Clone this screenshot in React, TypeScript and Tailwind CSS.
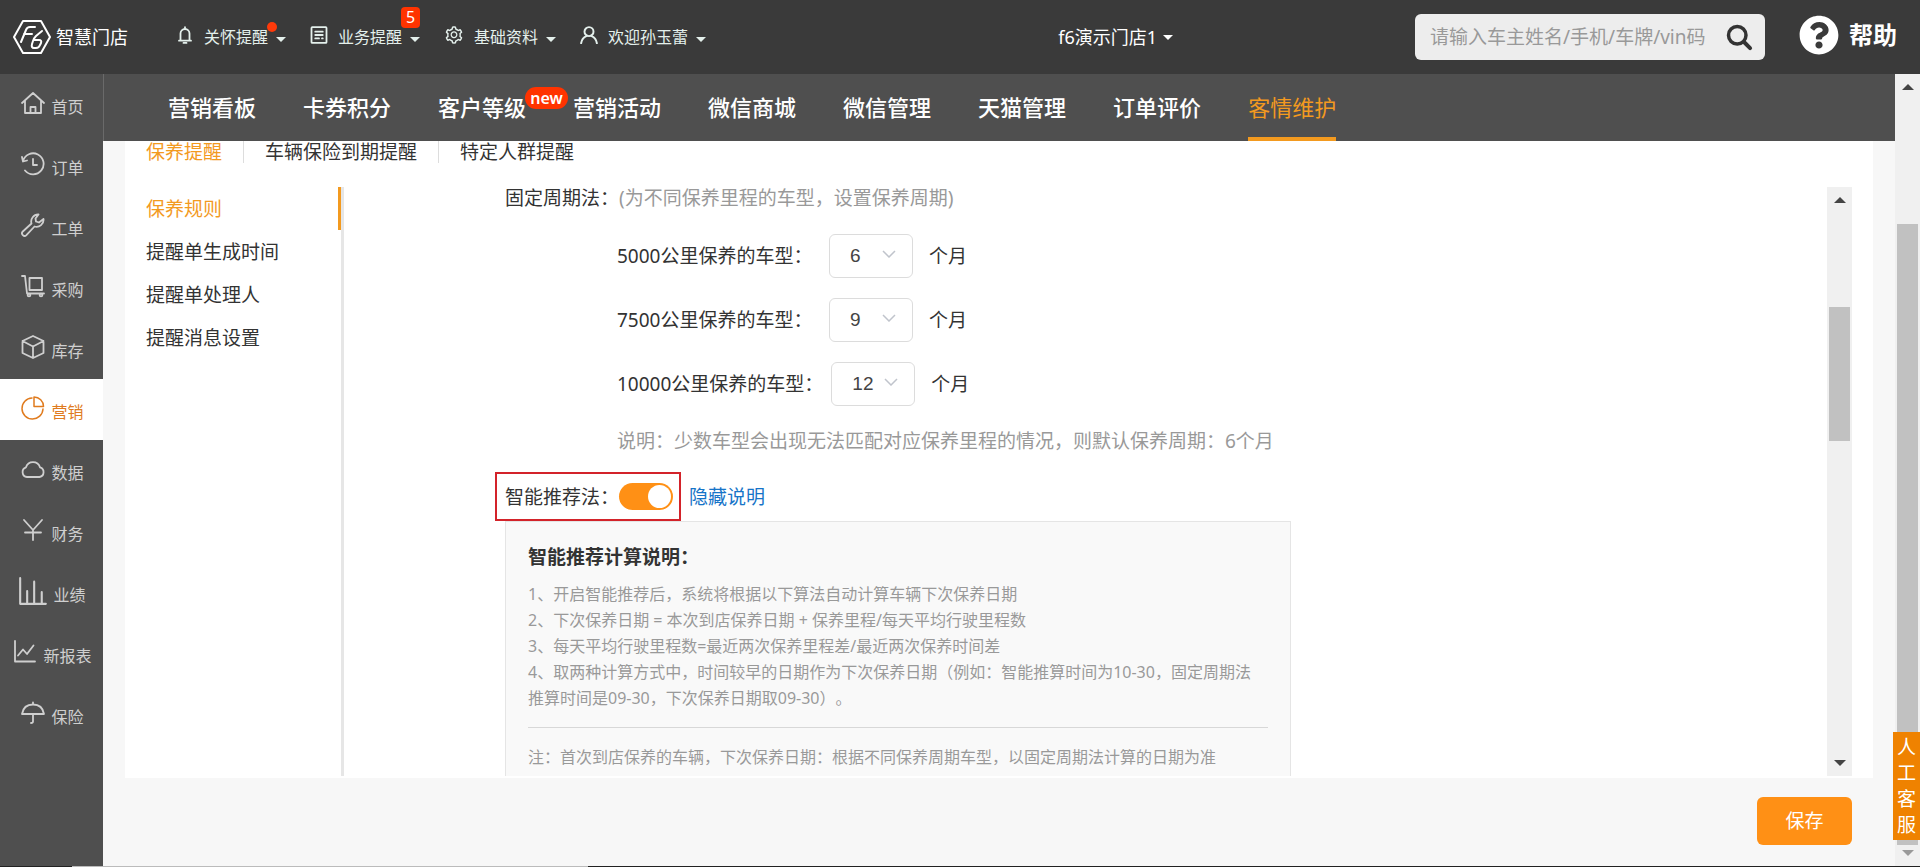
import React, { useState } from "react";
import type { ReactNode } from "react";
import { AiOutlineSetting } from "react-icons/ai";
import { FaQuestionCircle } from "react-icons/fa";

// ---------------- Icons ----------------
function Icon({
  children,
  className = "size-6",
  width = 2,
}: {
  children: ReactNode;
  className?: string;
  width?: number;
}) {
  return (
    <svg
      viewBox="0 0 24 24"
      className={className}
      fill="none"
      stroke="currentColor"
      strokeWidth={width}
      strokeLinecap="round"
      strokeLinejoin="round"
      aria-hidden="true"
    >
      {children}
    </svg>
  );
}

function Caret({ className = "h-[5px] w-[10px]" }: { className?: string }) {
  return (
    <svg viewBox="0 0 10 5" className={className} fill="currentColor" aria-hidden="true">
      <path d="M0 0h10L5 5z" />
    </svg>
  );
}

function ArrowUp() {
  return (
    <svg viewBox="0 0 12 6" className="h-[6px] w-3" fill="currentColor" aria-hidden="true">
      <path d="M0 6h12L6 0z" />
    </svg>
  );
}

function ArrowDown() {
  return (
    <svg viewBox="0 0 12 6" className="h-[6px] w-3" fill="currentColor" aria-hidden="true">
      <path d="M0 0h12L6 6z" />
    </svg>
  );
}

function Logo() {
  return (
    <svg
      viewBox="0 0 38 34"
      className="h-[34px] w-[38px]"
      fill="none"
      stroke="currentColor"
      strokeWidth="2"
      strokeLinejoin="round"
      strokeLinecap="round"
      aria-hidden="true"
    >
      <path d="M10 1h18l9 16-9 16H10L1 17z" />
      <path d="M22 7h-5q-3 0-4 3L8 22M11 14h8" />
      <path d="M29 11l-6 5q-2 2-3 5l-1 3q-1 4 2 4h2q3 0 4-3l1-2q1-3-2-3h-5" />
    </svg>
  );
}

// ---------------- Data ----------------
const sideItems = [
  {
    name: "首页",
    icon: (
      <Icon width={1.8}>
        <path d="M1 12L12 2l11 10M4 10v12h16V10M9.500 22v-6h5v6" />
      </Icon>
    ),
  },
  {
    name: "订单",
    icon: (
      <Icon width={1.8}>
        <path d="M2 9A10.500 10.500 0 1 1 4 18.500M1 5l1 4.500 4-1M12 7v6h4" />
      </Icon>
    ),
  },
  {
    name: "工单",
    icon: (
      <Icon width={1.8}>
        <path d="M17.500 1.500a7 7 0 0 0-7 9L1.800 18.500a2.500 2.500 0 0 0 3.600 3.600L13.500 13.500a7 7 0 0 0 9-7.500l-4.500 3.500-3-1-.500-3z" />
      </Icon>
    ),
  },
  {
    name: "采购",
    icon: (
      <Icon width={1.8}>
        <path d="M1 2h3l2 17.500h17" />
        <rect x="8.500" y="4" width="12.500" height="12" />
        <circle cx="8" cy="21" r="1.400" />
        <circle cx="20" cy="21" r="1.400" />
      </Icon>
    ),
  },
  {
    name: "库存",
    icon: (
      <Icon width={1.8}>
        <path d="M12 1l10.500 5v12L12 23 1.500 18V6zM1.500 6L12 11.500 22.500 6M12 11.500V23" />
      </Icon>
    ),
  },
  {
    name: "营销",
    icon: (
      <Icon width={1.5}>
        <path d="M11 2A10.500 10.500 0 1 0 22 13" />
        <path d="M13 1v9.500h9.500A9.500 9.500 0 0 0 13 1z" />
      </Icon>
    ),
  },
  {
    name: "数据",
    icon: (
      <Icon width={1.8}>
        <path d="M6 20a5 5 0 0 1-1-9.700 7.300 7.300 0 0 1 14 0A5 5 0 0 1 18.500 20z" />
      </Icon>
    ),
  },
  {
    name: "财务",
    icon: (
      <Icon width={1.8}>
        <path d="M3 2l9 10 9-10M12 12v10M4 14.500h16" />
      </Icon>
    ),
  },
  {
    name: "业绩",
    icon: (
      <Icon className="size-7" width={1.8}>
        <path d="M1 1v22h22M7 23V12M13 23V4M19.500 23V13" />
      </Icon>
    ),
  },
  {
    name: "新报表",
    icon: (
      <Icon width={1.8}>
        <path d="M2 1v20.500h20M5 15.500l5-6 4 4.500 6.500-8.500" />
      </Icon>
    ),
  },
  {
    name: "保险",
    icon: (
      <Icon width={1.8}>
        <path d="M1 13C2 7 6 3.500 12 3.500S22 7 23 13zM12 1.500v2M12 13v7.500q0 1.500-2 1.500" />
      </Icon>
    ),
  },
];

const navItems = [
  "营销看板",
  "卡券积分",
  "客户等级",
  "营销活动",
  "微信商城",
  "微信管理",
  "天猫管理",
  "订单评价",
  "客情维护",
];

const tabs = ["保养提醒", "车辆保险到期提醒", "特定人群提醒"];

const ruleMenu = ["保养规则", "提醒单生成时间", "提醒单处理人", "提醒消息设置"];

const months = Array.from({ length: 12 }, (_, i) => String(i + 1));

// ---------------- Header ----------------
function TopMenu({ icon, text, badge }: { icon: ReactNode; text: string; badge?: ReactNode }) {
  return (
    <button className="relative flex items-center text-base text-[#e4f0ec]">
      <span className="mr-[10px] mb-1">{icon}</span>
      {text}
      <Caret className="mt-1 ml-2 h-[5px] w-[10px]" />
      {badge}
    </button>
  );
}

function Header() {
  return (
    <header className="flex h-[74px] shrink-0 items-center bg-[#3a3a3a] text-white">
      <div className="flex flex-1 items-center pl-[13px]">
        <a href="#" className="flex items-center gap-[5px] text-lg">
          <Logo />
          智慧门店
        </a>
        <div className="ml-12 flex items-center gap-6">
          <TopMenu
            icon={
              <Icon className="size-[18px]" width={2.4}>
                <path d="M4 19.500h16M6 19V10a6 6 0 0 1 12 0v9M12 1.500v2M10 22.500h4" />
              </Icon>
            }
            text="关怀提醒"
            badge={<span className="absolute -top-[3px] right-[9px] size-[10px] rounded-full bg-[#ff3a0a]" />}
          />
          <TopMenu
            icon={
              <Icon className="size-[18px]" width={2.4}>
                <rect x="2" y="1.500" width="20" height="21" rx="1" />
                <path d="M7 7.500h10M7 12h10M7 16.500h5M16 16.500h1" />
              </Icon>
            }
            text="业务提醒"
            badge={
              <span className="absolute -top-[18px] right-0 h-[21px] w-[19px] rounded bg-[#ff3300] text-center leading-[21px] text-white">
                5
              </span>
            }
          />
          <TopMenu icon={<AiOutlineSetting className="size-5" />} text="基础资料" />
          <TopMenu
            icon={
              <Icon className="size-[18px]" width={2.6}>
                <circle cx="12" cy="7.500" r="6" />
                <path d="M1.500 23q1-7 7-9.500M22.500 23q-1-7-7-9.500" />
              </Icon>
            }
            text="欢迎孙玉蕾"
          />
        </div>
      </div>

      <button className="mr-[242px] flex items-center gap-[6px] text-lg">
        f6演示门店1
        <Caret className="h-[5px] w-[10px]" />
      </button>

      <div className="flex items-center pr-[23px]">
        <form className="flex h-[46px] w-[350px] items-center rounded-md bg-[#ededed] pr-3 pl-[15px]">
          <input
            type="text"
            aria-label="搜索"
            placeholder="请输入车主姓名/手机/车牌/vin码"
            className="min-w-0 flex-1 bg-transparent text-[19px] text-[#333] outline-none placeholder:text-[#999]"
          />
          <button type="button" aria-label="查询" className="text-[#333]">
            <Icon className="size-7" width={3}>
              <circle cx="10.500" cy="10.500" r="7.500" />
              <path d="M16.500 16.500l5 5" strokeWidth="3.400" />
            </Icon>
          </button>
        </form>
        <a href="#" className="mb-1 ml-[34px] flex items-center gap-[10px] text-2xl leading-8 font-bold">
          <FaQuestionCircle className="size-10" />
          帮助
        </a>
      </div>
    </header>
  );
}

function Sidebar() {
  return (
    <nav className="w-[103px] shrink-0 overflow-hidden bg-[#4f4f4f]">
      {sideItems.map((item) => (
        <a
          key={item.name}
          href="#"
          className={
            item.name === "营销"
              ? "flex h-[61px] items-center justify-center gap-[6px] bg-white pl-[2px] text-[#e07b1e]"
              : "flex h-[61px] items-center justify-center gap-[6px] pl-[2px] text-[#cfcfcf]"
          }
        >
          <span className="mb-1">{item.icon}</span>
          <span className="mt-1">{item.name}</span>
        </a>
      ))}
    </nav>
  );
}

function SubNav() {
  return (
    <nav className="flex h-[67px] shrink-0 gap-[47px] border-l border-[#6a6a6a] bg-[#4f4f4f] pl-16 font-medium">
      {navItems.map((name) => (
        <a
          key={name}
          href="#"
          className={
            name === "客情维护"
              ? "relative flex items-center border-y-4 border-t-transparent border-b-[#f39a1f] text-[22px] font-normal whitespace-nowrap text-[#f39a1f]"
              : "relative flex items-center text-[22px] whitespace-nowrap text-white"
          }
        >
          {name}
          {name === "客户等级" && (
            <span className="absolute top-[13px] left-[87px] h-[22px] w-[43px] rounded-full bg-[#ff3300] text-center text-base leading-[22px] font-semibold">
              new
            </span>
          )}
        </a>
      ))}
    </nav>
  );
}

// ---------------- Rules ----------------
function MonthSelect({ km, value }: { km: number; value: string }) {
  const id = "km-" + km;
  const [month, setMonth] = useState(value);

  return (
    <div className="flex h-11 items-center">
      <label htmlFor={id} className="min-w-[212px] pr-2">
        {km}公里保养的车型：
      </label>
      <div className="relative">
        <select
          id={id}
          value={month}
          onChange={(e) => setMonth(e.target.value)}
          className="h-11 w-[84px] appearance-none rounded-md border border-[#dcdcdc] bg-white pl-5 font-[Liberation_Sans] text-[#444]"
        >
          {months.map((m) => (
            <option key={m}>{m}</option>
          ))}
        </select>
        <svg
          viewBox="0 0 14 8"
          className="pointer-events-none absolute top-4 right-[17px] h-2 w-[14px]"
          fill="none"
          stroke="#c0c4cc"
          strokeWidth="1.500"
          aria-hidden="true"
        >
          <path d="M1 1l6 6 6-6" />
        </svg>
      </div>
      <span className="ml-4">个月</span>
    </div>
  );
}

function Rules() {
  const [smart, setSmart] = useState(true);

  return (
    <div className="-mt-3 min-w-0 flex-1 overflow-hidden pt-3 pl-[161px]">
      <p className="leading-[22px]">
        固定周期法：<span className="text-[#999]">(为不同保养里程的车型，设置保养周期)</span>
      </p>

      <div className="mt-[25px] ml-[112px] flex flex-col gap-5">
        <MonthSelect km={5000} value="6" />
        <MonthSelect km={7500} value="9" />
        <MonthSelect km={10000} value="12" />
      </div>

      <p className="mt-6 ml-[112px] leading-[22px] text-[#999]">
        说明：少数车型会出现无法匹配对应保养里程的情况，则默认保养周期：6个月
      </p>

      <div className="mt-5 -ml-[10px] flex items-center gap-2">
        <label className="flex h-[49px] items-center border-2 border-[#d3232a] pr-[6px] pl-2">
          智能推荐法：
          <input
            type="checkbox"
            role="switch"
            checked={smart}
            onChange={(e) => setSmart(e.target.checked)}
            className="h-[27px] w-[54px] appearance-none rounded-full bg-[#ccc] p-[2px] before:block before:size-[23px] before:rounded-full before:bg-white checked:bg-[#ff9015] checked:before:ml-auto"
          />
        </label>
        <a href="#" className="text-[#1674c8]">
          隐藏说明
        </a>
      </div>

      <section className="w-[786px] max-w-full border border-[#e5e5e5] bg-[#f9f9f9] px-[22px] pt-[22px] pb-6 text-base leading-[26px] text-[#999]">
        <h2 className="mb-[11px] text-[19px] font-bold text-[#333]">智能推荐计算说明：</h2>
        <p>1、开启智能推荐后，系统将根据以下算法自动计算车辆下次保养日期</p>
        <p>2、下次保养日期 = 本次到店保养日期 + 保养里程/每天平均行驶里程数</p>
        <p>3、每天平均行驶里程数=最近两次保养里程差/最近两次保养时间差</p>
        <p>
          4、取两种计算方式中，时间较早的日期作为下次保养日期（例如：智能推算时间为10-30，固定周期法
          <br />
          推算时间是09-30，下次保养日期取09-30）。
        </p>
        <hr className="my-4 border-[#d8d8d8]" />
        <p>注：首次到店保养的车辆，下次保养日期：根据不同保养周期车型，以固定周期法计算的日期为准</p>
      </section>
    </div>
  );
}

function Panel() {
  return (
    <main className="mx-[22px] flex min-h-0 flex-1 flex-col bg-white pr-[21px] pb-[2px] text-[19px] leading-[22px] text-[#333]">
      <div className="flex h-[22px] shrink-0">
        {tabs.map((tab, i) => (
          <a
            key={tab}
            href="#"
            className={
              i === 0
                ? "px-[21px] text-[#f39a1f]"
                : "border-l border-[#ddd] px-[21px]"
            }
          >
            {tab}
          </a>
        ))}
      </div>

      <div className="mt-6 flex min-h-0 flex-1">
        <ul className="w-[219px] shrink-0 border-r-[3px] border-[#e6e6e6]">
          {ruleMenu.map((name, i) => (
            <li key={name}>
              <a
                href="#"
                className={
                  i === 0
                    ? "flex h-[43px] items-center border-r-[3px] border-[#f39a1f] pl-[21px] text-[#f39a1f]"
                    : "flex h-[43px] items-center pl-[21px]"
                }
              >
                {name}
              </a>
            </li>
          ))}
        </ul>
        <Rules />
        <div className="flex w-[25px] flex-col items-center bg-[#f0f0f0] py-[10px] text-[#444]">
          <ArrowUp />
          <div className="mt-[104px] h-[134px] w-[21px] bg-[#c1c1c1]" />
          <div className="mt-auto">
            <ArrowDown />
          </div>
        </div>
      </div>
    </main>
  );
}

function App() {
  return (
    <div className="flex h-screen flex-col overflow-hidden bg-[#f7f7f7] font-['Noto_Sans','Noto_Sans_CJK_SC',sans-serif] [text-spacing-trim:space-all]">
      <Header />
      <div className="flex min-h-0 flex-1">
        <Sidebar />
        <div className="flex min-w-0 flex-1 flex-col">
          <SubNav />
          <Panel />
          <div className="flex h-[88px] shrink-0 items-start justify-end pt-[19px] pr-[43px]">
            <button className="h-12 w-[95px] rounded-md bg-[#ff9015] text-[19px] text-white">保存</button>
          </div>
        </div>
        <div className="flex w-[25px] shrink-0 flex-col items-center bg-[#f0f0f0] py-[10px] text-[#444]">
          <ArrowUp />
          <div className="mt-[134px] mb-[5px] w-[21px] flex-1 bg-[#c1c1c1]" />
          <span className="text-[#999]">
            <ArrowDown />
          </span>
        </div>
      </div>
      <div className="flex h-px shrink-0 bg-[#222]">
        <div className="ml-[72px] w-[516px] bg-[#bbb]" />
      </div>
      <button className="fixed right-0 bottom-[27px] w-[27px] bg-[#ef8200] px-1 py-[2px] text-[19px] leading-[26px] text-white">
        人工客服
      </button>
    </div>
  );
}

export default App;
